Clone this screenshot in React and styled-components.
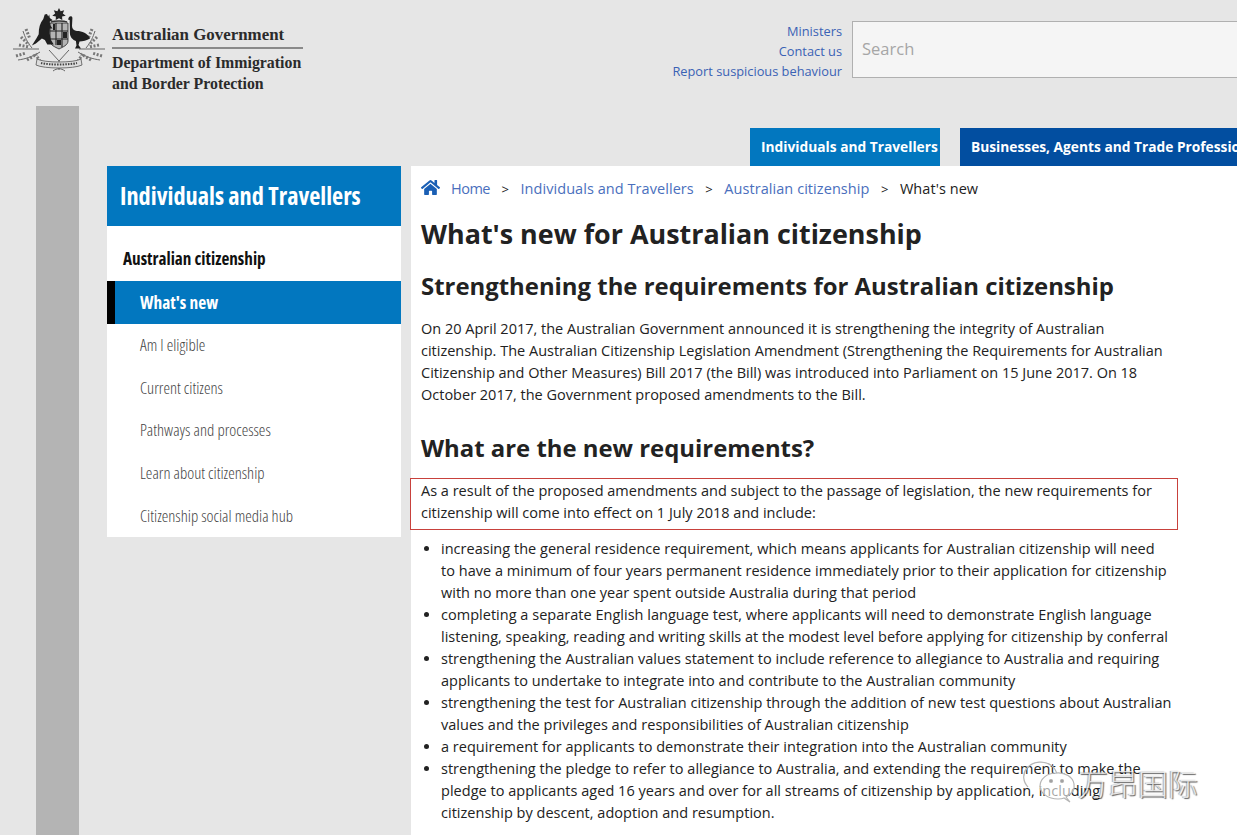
import React from 'react'
import styled, { createGlobalStyle } from 'styled-components'
import { FaHome } from 'react-icons/fa'

const sideItems = [
   'Am I eligible',
   'Current citizens',
   'Pathways and processes',
   'Learn about citizenship',
   'Citizenship social media hub',
]

const crumbs = ['Individuals and Travellers', 'Australian citizenship']

const requirements = [
   'increasing the general residence requirement, which means applicants for Australian citizenship will need to\u00a0have a minimum of four years permanent residence immediately prior to their application for citizenship with no more than one year spent outside Australia during that period',
   'completing a separate English language test, where applicants will need to demonstrate English language listening, speaking, reading and writing skills at the modest level before applying for citizenship by conferral',
   'strengthening the Australian values statement to include reference to allegiance to Australia and requiring applicants to undertake to integrate into and contribute to the Australian community',
   'strengthening the test for Australian citizenship through the addition of new test questions about Australian values and the privileges and responsibilities of Australian citizenship',
   'a requirement for applicants to demonstrate their integration into the Australian community',
   'strengthening the pledge to refer to allegiance to Australia, and extending the requirement to make the pledge to applicants aged 16 years and over for all streams of citizenship by application, including citizenship\u00a0by descent, adoption and resumption.',
]

const Crest = () => (
   <svg width="92" height="70" viewBox="0 0 92 70">
      {/* foliage */}
      <g fill="none" stroke="#666" strokeWidth="1">
         <path d="M0 42h26M92 42H66" />
         <path d="M5 53c7-1 14-3 22-8M87 53c-7-1-14-3-22-8" />
         <path d="M10 24c2 6 4 11 9 17M82 24c-2 6-4 11-9 17" />
         <path d="M36 43l10 11 10-11M46 54v9M40 64c4-3 8-3 12 0" />
      </g>
      <g fill="none" stroke="#777" strokeWidth="3" strokeDasharray="2 1.6">
         <path d="M8 30l8 8M6 38l10 2M13 22l4 10M3 49l10-3M14 53l10-6M22 47l5 7" />
         <path d="M84 30l-8 8M86 38l-10 2M79 22l-4 10M89 49l-10-3M78 53l-10-6M70 47l-5 7" />
      </g>
      {/* scroll */}
      <path d="M24 52c7 4 37 4 44 0l1 6c-8 4-38 4-46 0z" fill="#ddd" stroke="#555" strokeWidth="0.8" />
      <path d="M28 56c8 2 28 2 36 0" stroke="#444" strokeWidth="2" strokeDasharray="1.5 1.2" fill="none" />
      {/* shield */}
      <path d="M37 16h18v18c0 4-5 6-9 8-4-2-9-4-9-8z" fill="#b5b5b5" stroke="#222" strokeWidth="0.8" />
      <path d="M37 24h18M37 32h18M43 16v22M49 16v24" stroke="#222" strokeWidth="1.1" />
      <path d="M40 17h2v6h-2zM50 25h4v6h-4zM44 33h4v5h-4z" fill="#222" />
      {/* star and wreath */}
      <path d="M46 1l1.6 3.2 3.6-1-1.4 3.4 2.9 2.2-3.6.7.2 3.6-3.3-1.9-3.3 1.9.2-3.6-3.6-.7 2.9-2.2-1.4-3.4 3.6 1z" fill="#222" />
      <path d="M38 15c3-1.4 13-1.4 16 0" stroke="#333" strokeWidth="1.6" fill="none" />
      {/* kangaroo */}
      <path d="M34 7l1.2 2.6 1-2 .6 3.4 3 2.2-3 1.2.3 3.6 2.4 3.5-2.6.1-.2 5 1 6 3 4.8h-6.4l-2.4-4.4-3-1.6-6 5-4 2.2 4.6-7.4 2.2-4c0-6 1.2-11.200 4.600-15.200l1.400-4.600z" fill="#1f1f1f" />
      {/* emu */}
      <path d="M56 10c1.200-1.200 3.400-1 3.400 1l-.4 8c0 3 2 4.400 5 5 5 0 10.500 2 13 7.400-3 2-7.500 3-10.500 3l-1 3.600 2.500 3.500H62l1.500-3-.6-4.600c-3-1-6-4-6-8l-.2-13-1.700-.4z" fill="#1f1f1f" />
   </svg>
)

const App = () => {
   return (
      <Page>
         <GlobalStyle />
         <Header>
            <Brand>
               <Crest />
               <BrandText>
                  <GovName>Australian Government</GovName>
                  <DeptName>
                     Department of Immigration
                     <br />
                     and Border Protection
                  </DeptName>
               </BrandText>
            </Brand>
            <HeaderRight>
               <TopLinks>
                  <TopLink href="#">Ministers</TopLink>
                  <TopLink href="#">Contact us</TopLink>
                  <TopLink href="#">Report suspicious behaviour</TopLink>
               </TopLinks>
               <SearchInput placeholder="Search" readOnly />
            </HeaderRight>
         </Header>
         <Body>
            <Rail />
            <Content>
               <Tabs>
                  <Tab $active>Individuals and Travellers</Tab>
                  <Tab>Businesses, Agents and Trade Professionals</Tab>
               </Tabs>
               <Columns>
                  <Sidebar>
                     <SideTitle>
                        <Condensed>Individuals and Travellers</Condensed>
                     </SideTitle>
                     <SideHeading>
                        <Condensed>Australian citizenship</Condensed>
                     </SideHeading>
                     <SideActive>
                        <Condensed>What's new</Condensed>
                     </SideActive>
                     {sideItems.map((item) => (
                        <SideItem key={item}>
                           <Condensed>{item}</Condensed>
                        </SideItem>
                     ))}
                  </Sidebar>
                  <Main>
                     <Breadcrumb>
                        <HomeIcon />
                        <HomeLink href="#">Home</HomeLink>
                        <Sep>&gt;</Sep>
                        {crumbs.map((crumb) => (
                           <React.Fragment key={crumb}>
                              <CrumbLink href="#">{crumb}</CrumbLink>
                              <Sep>&gt;</Sep>
                           </React.Fragment>
                        ))}
                        <span>What's new</span>
                     </Breadcrumb>
                     <Title>What's new for Australian citizenship</Title>
                     <Subtitle>Strengthening the requirements for Australian citizenship</Subtitle>
                     <Paragraph>
                        On 20 April 2017, the Australian Government announced it is strengthening the integrity of
                        Australian citizenship. The Australian Citizenship Legislation Amendment (Strengthening the
                        Requirements for Australian Citizenship and Other Measures) Bill 2017 (the Bill) was introduced
                        into Parliament on 15 June 2017. On 18 October 2017, the Government proposed amendments to the
                        Bill.
                     </Paragraph>
                     <SectionTitle>What are the new requirements?</SectionTitle>
                     <Highlight>
                        As a result of the proposed amendments and subject to the passage of legislation, the new
                        requirements for citizenship will come into effect on 1 July 2018 and include:
                     </Highlight>
                     <List>
                        {requirements.map((item) => (
                           <li key={item}>{item}</li>
                        ))}
                     </List>
                  </Main>
               </Columns>
            </Content>
         </Body>
         <Watermark>
            <svg width="58" height="50" viewBox="0 0 58 50">
               <g fill="none" stroke="#b5b5b5" strokeWidth="1.2">
                  <path d="M8 30c-5-5-6-13-1-19 6-7 18-8 25-2 3 2 4 5 5 8" />
                  <path d="M46 40c6-3 9-8 8-13-1-7-9-12-18-11-9 0-16 6-16 13s8 13 18 13c2 0 4 0 6-1l6 4z" fill="#fff" fillOpacity="0.6" />
                  <circle cx="31" cy="24" r="1.5" fill="#999" />
                  <circle cx="42" cy="24" r="1.5" fill="#999" />
               </g>
            </svg>
            <WatermarkText>万昂国际</WatermarkText>
         </Watermark>
      </Page>
   )
}

export default App

const GlobalStyle = createGlobalStyle`
   html, body {
      margin: 0;
      background: #e6e6e6;
   }
   * {
      box-sizing: border-box;
   }
`
const Page = styled.div`
   position: relative;
   width: 1237px;
   height: 835px;
   overflow: hidden;
   background: #e6e6e6;
   font-family: 'Open Sans', sans-serif;
   color: #222;
`
const Header = styled.header`
   display: flex;
   justify-content: space-between;
   height: 106px;
   padding: 7px 0 0 13px;
`
const Brand = styled.div`
   display: flex;
   gap: 7px;
   align-items: flex-start;
`
const BrandText = styled.div`
   margin-top: 18px;
   font-family: 'Liberation Serif', serif;
   font-weight: 700;
   color: #2b2b2b;
`
const GovName = styled.div`
   width: 191px;
   height: 24px;
   font-size: 16.9px;
   line-height: 20px;
   border-bottom: 2px solid #8a8a8a;
`
const DeptName = styled.div`
   margin-top: 3px;
   font-size: 15.85px;
   line-height: 21px;
`
const HeaderRight = styled.div`
   display: flex;
   gap: 10px;
   width: 565px;
   padding-top: 14px;
   flex-shrink: 0;
`
const TopLinks = styled.div`
   display: flex;
   flex-direction: column;
   align-items: flex-end;
   width: 170px;
   flex-shrink: 0;
`
const TopLink = styled.a`
   font-size: 12.8px;
   line-height: 20px;
   color: #3a62b5;
   text-decoration: none;
   white-space: nowrap;
`
const SearchInput = styled.input`
   width: 400px;
   height: 57px;
   flex-shrink: 0;
   padding: 0 9px 2px;
   border: 1px solid #b0b0b0;
   background: #f5f5f5;
   font-family: 'Open Sans', sans-serif;
   font-size: 16.5px;
   outline: none;
   &::placeholder {
      color: #a6a6a6;
   }
`
const Body = styled.div`
   display: flex;
   height: 729px;
   padding-left: 36px;
`
const Rail = styled.div`
   width: 43px;
   flex-shrink: 0;
   background: #b4b4b4;
`
const Content = styled.div`
   flex: 1;
   min-width: 0;
   padding: 22px 0 0 28px;
`
const Tabs = styled.nav`
   display: flex;
   gap: 20px;
   height: 38px;
   padding-left: 643px;
`
const Tab = styled.div`
   flex-shrink: 0;
   width: ${({ $active }) => ($active ? '190px' : 'auto')};
   height: 39px;
   padding-left: 11px;
   background: ${({ $active }) => ($active ? '#0277bf' : '#024ea0')};
   color: #fff;
   font-size: 13.75px;
   font-weight: 700;
   line-height: 38px;
   white-space: nowrap;
`
const Columns = styled.div`
   display: flex;
   gap: 10px;
`
const Sidebar = styled.aside`
   width: 294px;
   height: 371px;
   flex-shrink: 0;
   background: #fff;
`
const Condensed = styled.span`
   display: inline-block;
   font-stretch: 75%;
   white-space: nowrap;
`
const SideTitle = styled.h2`
   height: 60px;
   margin: 0;
   padding-left: 13px;
   background: #0277bf;
   color: #fff;
   font-size: 24.3px;
   font-weight: 700;
   line-height: 60px;
`
const SideHeading = styled.div`
   height: 55px;
   padding: 22px 0 0 16px;
   color: #111;
   font-size: 17.2px;
   font-weight: 700;
   line-height: 22px;
`
const SideActive = styled.div`
   height: 43px;
   padding-left: 25px;
   border-left: 8px solid #000;
   background: #0277bf;
   color: #fff;
   font-size: 17.4px;
   font-weight: 700;
   line-height: 42px;
`
const SideItem = styled.div`
   height: 42.7px;
   padding-left: 33px;
   color: #444;
   font-size: 16.6px;
   font-weight: 300;
   line-height: 42.7px;
`
const Main = styled.main`
   flex: 1;
   min-width: 0;
   height: 669px;
   padding: 0 58px 0 10px;
   background: #fff;
   font-size: 14.5px;
   line-height: 22px;
`
const Breadcrumb = styled.div`
   display: flex;
   align-items: center;
   height: 44px;
   padding-top: 1px;
   letter-spacing: 0.06px;
   white-space: nowrap;
`
const HomeIcon = styled(FaHome)`
   width: 19px;
   height: 19px;
   margin: -3px 11px 0 0;
   color: #1a5fb4;
`
const CrumbLink = styled.a`
   color: #4a6fbd;
   text-decoration: none;
`
const HomeLink = styled(CrumbLink)`
   letter-spacing: -0.5px;
`
const Sep = styled.span`
   margin: 0 11.5px;
   font-size: 13px;
`
const Title = styled.h1`
   margin: 6px 0 0;
   color: #222;
   font-size: 26.9px;
   font-weight: 700;
   line-height: 36px;
`
const Subtitle = styled.h2`
   margin: 17px 0 0;
   color: #222;
   font-size: 23.9px;
   font-weight: 700;
   line-height: 34px;
`
const Paragraph = styled.p`
   margin: 15px 0 0;
`
const SectionTitle = styled.h2`
   margin: 25px 0 0;
   color: #222;
   font-size: 23.9px;
   font-weight: 700;
   line-height: 34px;
`
const Highlight = styled.p`
   margin: 13px 0 0 -11px;
   padding: 1px 20px 5px 10px;
   border: 1px solid #c8413c;
   width: 768px;
`
const List = styled.ul`
   margin: 8px 0 0;
   padding: 0 5px 0 20px;
   letter-spacing: 0.02px;
   list-style: disc;
`
const Watermark = styled.div`
   position: absolute;
   left: 1020px;
   top: 757px;
   display: flex;
   align-items: center;
`
const WatermarkText = styled.span`
   color: rgba(255, 255, 255, 0.75);
   font-family: 'Noto Sans CJK SC', sans-serif;
   font-size: 30px;
   font-weight: 300;
   line-height: 46px;
   text-shadow: 1px 1px 1px rgba(0, 0, 0, 0.6), -1px 0 1px rgba(0, 0, 0, 0.35);
`
